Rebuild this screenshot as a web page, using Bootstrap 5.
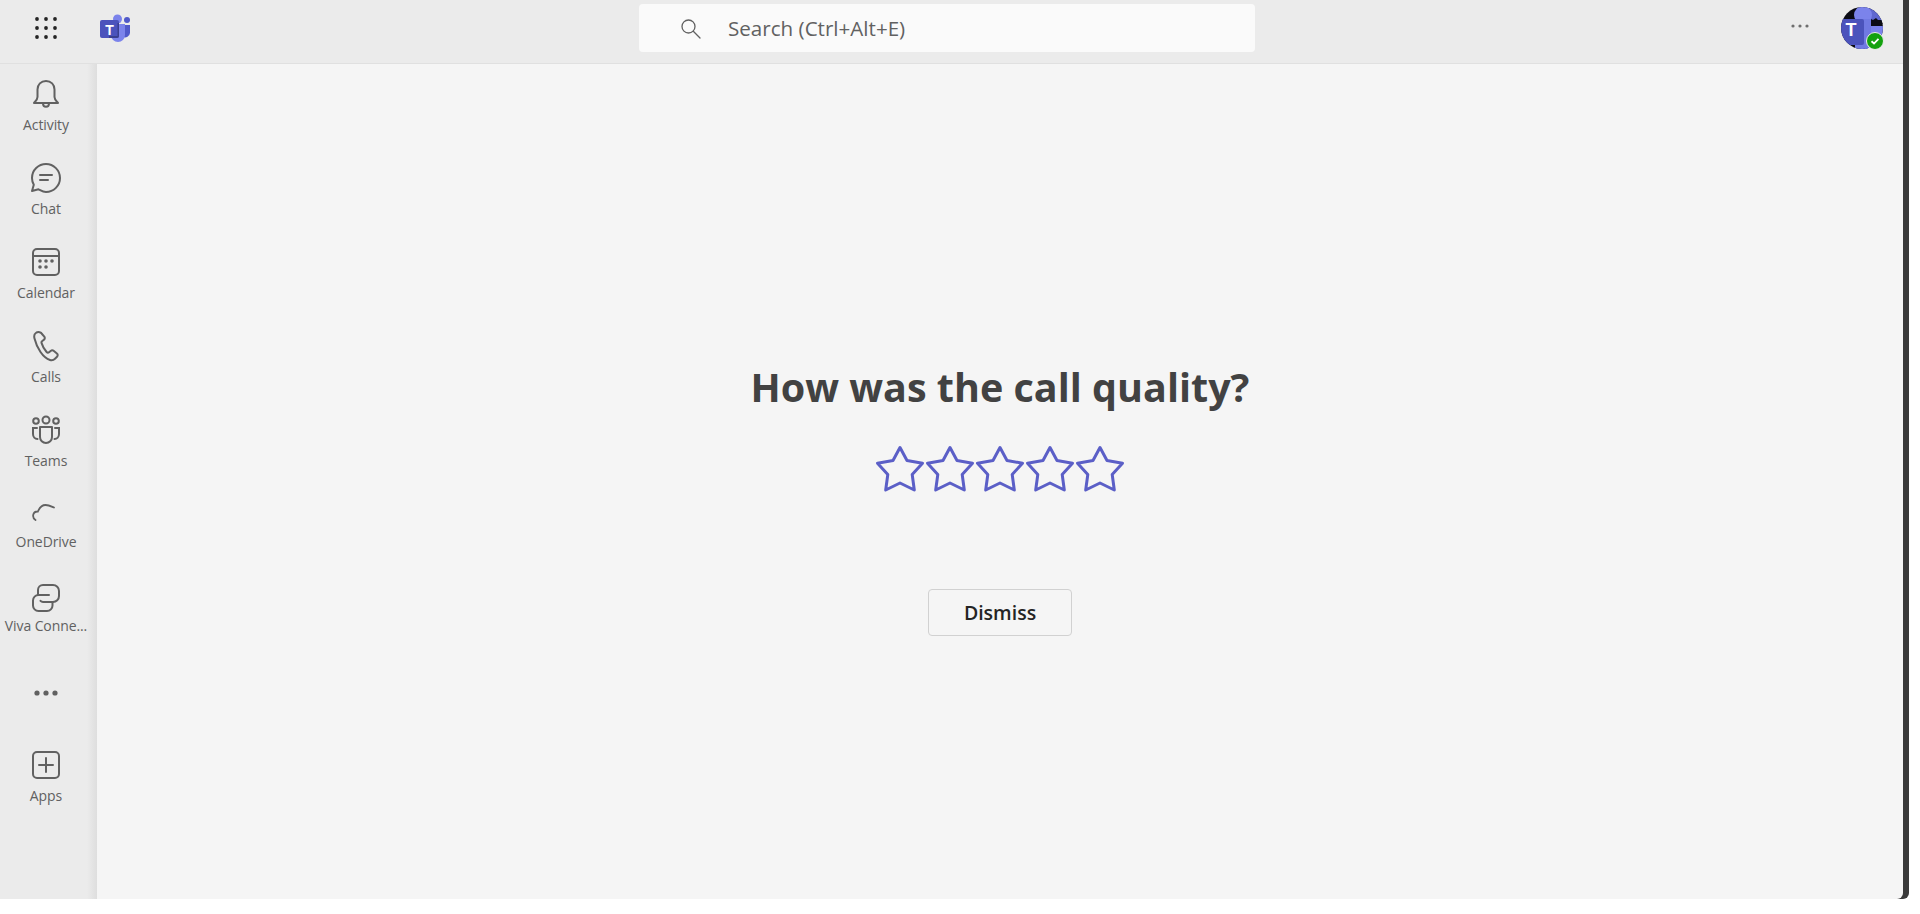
<!DOCTYPE html>
<html lang="en">
<head>
  <meta charset="UTF-8">
  <title>Microsoft Teams</title>
  <link href="https://cdn.jsdelivr.net/npm/bootstrap@5.3.0/dist/css/bootstrap.min.css" rel="stylesheet">
  <style>
    html, body { height: 100%; overflow: hidden; }
    body { background: #fff; font-family: "Open Sans", "Noto Sans", "Liberation Sans", sans-serif; }
    .window-back { width: 1909px; height: 899px; background: #3a3a3a; border-bottom-right-radius: 6px; }
    .app-frame { width: 1903px; height: 899px; background: #f5f5f5; border-bottom-right-radius: 6px; overflow: hidden; }
    .top-bar { height: 64px; padding-bottom: 7px; background: #ebebeb; border-bottom: 1px solid #e0e0e0; }
    .waffle-cell { width: 92px; }
    .logo-cell { width: 32px; margin-left: 8px; line-height: 0; }
    .search-box { width: 616px; height: 48px; margin-left: 507px; background: #fafafa; border-radius: 4px; color: #616161; font-size: 20.6px; padding-left: 41px; gap: 27px; }
    .more-top { margin-left: auto; width: 24px; margin-right: 29px; margin-bottom: 4px; }
    .me-pic { position: relative; width: 42px; height: 42px; margin-right: 20px; }
    .status-dot { position: absolute; right: -1px; bottom: -1px; width: 18px; height: 18px; border-radius: 50%; background: #13a10e; border: 1px solid #ebebeb; }
    .side-rail { width: 97px; padding: 5px 5px 0 0; background: linear-gradient(to right, #ebebeb 87px, #dedede 97px); }
    .rail-item { height: 84px; color: #616161; font-size: 14px; line-height: 18px; padding-top: 9px; }
    .rail-item svg { margin-bottom: 6px; }
    .rail-item span { letter-spacing: -.1px; white-space: nowrap; }
    .rail-onedrive { height: 82px; padding-top: 6px; }
    .rail-viva { height: 80px; padding-top: 11px; }
    .rail-viva svg { margin-bottom: 3px; }
    .rail-more { height: 84px; }
    .rail-apps { padding-top: 14px; }
    .rate-title { font-size: 39.5px; line-height: 54px; font-weight: 700; color: #424242; margin: 296px 0 0; }
    .star-row { margin-top: 31px; }
    .dismiss-btn { width: 144px; height: 47px; margin-top: 94px; background: #f5f5f5; border: 1px solid #d1d1d1; border-radius: 4px; font-size: 19.5px; font-weight: 600; color: #242424; padding: 0; }
    .dismiss-btn:hover { background: #f0f0f0; border-color: #c7c7c7; color: #242424; }
  </style>
</head>
<body>
  <div class="window-back">
  <div class="app-frame d-flex flex-column">

    <div class="top-bar d-flex align-items-center flex-shrink-0">
      <div class="waffle-cell d-flex justify-content-center">
        <svg width="24" height="24" viewBox="0 0 24 24" fill="#242424">
          <circle cx="3" cy="3" r="1.900"/><circle cx="12" cy="3" r="1.900"/><circle cx="21" cy="3" r="1.900"/>
          <circle cx="3" cy="12" r="1.900"/><circle cx="12" cy="12" r="1.900"/><circle cx="21" cy="12" r="1.900"/>
          <circle cx="3" cy="21" r="1.900"/><circle cx="12" cy="21" r="1.900"/><circle cx="21" cy="21" r="1.900"/>
        </svg>
      </div>
      <div class="logo-cell">
        <svg width="32" height="28" viewBox="0 0 32 28">
          <circle cx="27" cy="6" r="3" fill="#5059c9"/>
          <path d="M23 11h7v8a5 5 0 0 1-7 4z" fill="#5059c9"/>
          <circle cx="17.500" cy="5" r="4.500" fill="#7b83eb"/>
          <path d="M11 10h14v11a7 7 0 0 1-14 0z" fill="#7b83eb"/>
          <rect x="0" y="6" width="19" height="18" rx="2" fill="#4b53bc"/>
          <path d="M19 9h-1.500v13H9v2h8a2 2 0 0 0 2-2z" fill="#3a3f8f"/>
          <text x="9.500" y="20.500" text-anchor="middle" fill="#fff" font-family="Liberation Sans, sans-serif" font-size="14" font-weight="700">T</text>
        </svg>
      </div>
      <div class="search-box d-flex align-items-center">
        <svg width="21" height="21" viewBox="0 0 21 21" fill="none" stroke="#616161" stroke-width="1.300">
          <circle cx="8.500" cy="8.500" r="6.500"/><path d="M13.300 13.300 20 20" stroke-linecap="round"/>
        </svg>
        <span>Search (Ctrl+Alt+E)</span>
      </div>
      <div class="more-top d-flex justify-content-center">
        <svg width="18" height="4" viewBox="0 0 18 4" fill="#6e6e6e"><circle cx="2" cy="2" r="1.600"/><circle cx="9" cy="2" r="1.600"/><circle cx="16" cy="2" r="1.600"/></svg>
      </div>
      <div class="me-pic">
        <svg width="42" height="42" viewBox="0 0 42 42">
          <defs><clipPath id="picClip"><circle cx="21" cy="21" r="21"/></clipPath></defs>
          <g clip-path="url(#picClip)">
            <rect width="42" height="42" fill="#0b0b14"/>
            <rect x="24" y="0" width="18" height="14" fill="#5f67cf"/>
            <path d="M22 15l5-1 3-2 2 1 3-2 2 2 5 0v4H22z" fill="#0b0b14"/>
            <rect x="24" y="19" width="18" height="23" fill="#7b83eb"/>
            <circle cx="22" cy="8" r="9" fill="#7b83eb"/>
            <rect x="14" y="12" width="16" height="30" fill="#7079e2"/>
            <rect x="-2" y="12" width="25" height="26" rx="2" fill="#4b53bc"/>
            <text x="10" y="29" text-anchor="middle" fill="#fff" font-family="Liberation Sans, sans-serif" font-size="18" font-weight="700">T</text>
          </g>
        </svg>
        <div class="status-dot d-flex align-items-center justify-content-center">
          <svg width="10" height="10" viewBox="0 0 10 10" fill="none" stroke="#fff" stroke-width="1.800"><path d="M1.500 5.300 4 7.500 8.500 2.800"/></svg>
        </div>
      </div>
    </div>

    <div class="d-flex flex-grow-1">
      <nav class="side-rail d-flex flex-column flex-shrink-0">
        <div class="rail-item d-flex flex-column align-items-center">
          <svg width="32" height="32" viewBox="0 0 32 32" fill="none" stroke="#616161" stroke-width="2">
            <path d="M4 25h24c-1.700-2-3.500-3.500-3.500-6v-7.500C24.500 6.500 21 3 16 3s-8.500 3.500-8.500 8.500V19c0 2.500-1.800 4-3.500 6z" stroke-linejoin="round"/>
            <path d="M13 25.500c0 2 1.300 3.200 3 3.200s3-1.200 3-3.200"/>
          </svg>
          <span>Activity</span>
        </div>
        <div class="rail-item d-flex flex-column align-items-center">
          <svg width="32" height="32" viewBox="0 0 32 32" fill="none" stroke="#616161" stroke-width="2">
            <path d="M16 2C8.500 2 2 8 2 16c0 2.500.7 4.800 1.800 6.800L2 29l6.500-1.700C10.700 28.400 13.200 30 16 30c7.700 0 14-6.300 14-14S23.700 2 16 2z" stroke-linejoin="round"/>
            <path d="M10 13h12M10 18h8" stroke-linecap="round"/>
          </svg>
          <span>Chat</span>
        </div>
        <div class="rail-item d-flex flex-column align-items-center">
          <svg width="32" height="32" viewBox="0 0 32 32" fill="none" stroke="#616161" stroke-width="2">
            <rect x="3" y="3" width="26" height="26" rx="4"/>
            <path d="M3 10h26"/>
            <g fill="#616161" stroke="none"><circle cx="10" cy="15" r="1.800"/><circle cx="16" cy="15" r="1.800"/><circle cx="22" cy="15" r="1.800"/><circle cx="10" cy="21" r="1.800"/><circle cx="16" cy="21" r="1.800"/></g>
          </svg>
          <span>Calendar</span>
        </div>
        <div class="rail-item d-flex flex-column align-items-center">
          <svg width="32" height="32" viewBox="0 0 32 32" fill="none" stroke="#616161" stroke-width="2">
            <path d="M6.500 2.500 5.800 3C4 4.200 4 6.500 4.500 8.500c1.200 5 3.300 9.500 6 13.500 2.600 3.800 5.500 6.700 9.500 8 1.800.6 3.600.2 5-1.200l2-2c1-1 1-2.500-.1-3.400l-3-2.400c-1-.8-2.300-.8-3.300 0l-1.500 1.200c-.8.600-1.800.5-2.500-.2-2.400-2.700-4-5.500-5-8.900-.3-.9 0-1.800.9-2.300l1-.7c1.100-.7 1.500-2 1-3.200L12 4c-.8-1.600-3.700-2.400-5.500-1.500z" stroke-linejoin="round"/>
          </svg>
          <span>Calls</span>
        </div>
        <div class="rail-item d-flex flex-column align-items-center">
          <svg width="32" height="32" viewBox="0 0 32 32" fill="none" stroke="#616161" stroke-width="2">
            <circle cx="16" cy="6" r="3.500"/><circle cx="6" cy="7" r="2.800"/><circle cx="26" cy="7" r="2.800"/>
            <path d="M10 13h12v10c0 3.500-2.700 6-6 6s-6-2.500-6-6z" stroke-linejoin="round"/>
            <path d="M7 14H3v6c0 3 2 5 4.500 5M25 14h4v6c0 3-2 5-4.500 5" stroke-linecap="round"/>
          </svg>
          <span>Teams</span>
        </div>
        <div class="rail-item rail-onedrive d-flex flex-column align-items-center">
          <svg width="32" height="32" viewBox="0 0 32 32" fill="none" stroke="#616161" stroke-width="1.800">
            <path d="M5.500 25c-1.800-1-2.700-2.500-2.300-5 .4-2.300 2.300-3.600 4.700-3.500C9.200 13.500 12 10 15.500 10c3 0 5 1 8.500 2.500" stroke-linecap="round"/>
          </svg>
          <span>OneDrive</span>
        </div>
        <div class="rail-item rail-viva d-flex flex-column align-items-center">
          <svg width="32" height="32" viewBox="0 0 32 32" fill="none" stroke="#616161" stroke-width="2">
            <path d="M8 13V8a5 5 0 0 1 5-5h10a6 6 0 0 1 6 6v5a6 6 0 0 1-6 6H13a3.500 3.500 0 0 1-2.500-1.200" stroke-linecap="round"/>
            <path d="M19 13H8.500A5.500 5.500 0 0 0 3 18.500v5A5.500 5.500 0 0 0 8.500 29H17a5.500 5.500 0 0 0 5.500-5.500V20" stroke-linecap="round"/>
          </svg>
          <span>Viva Conne...</span>
        </div>
        <div class="rail-more d-flex align-items-center justify-content-center">
          <svg width="24" height="6" viewBox="0 0 24 6" fill="#616161"><circle cx="3" cy="3" r="2.600"/><circle cx="12" cy="3" r="2.600"/><circle cx="21" cy="3" r="2.600"/></svg>
        </div>
        <div class="rail-item rail-apps d-flex flex-column align-items-center">
          <svg width="32" height="32" viewBox="0 0 32 32" fill="none" stroke="#616161" stroke-width="2">
            <rect x="3" y="3" width="26" height="26" rx="4"/>
            <path d="M16 9v14M9 16h14" stroke-linecap="round"/>
          </svg>
          <span>Apps</span>
        </div>
      </nav>

      <main class="flex-grow-1 d-flex flex-column align-items-center">
        <h1 class="rate-title">How was the call quality?</h1>
        <div class="star-row d-flex">
          <svg width="0" height="0" class="position-absolute">
            <symbol id="starOutline" viewBox="0 0 50 50">
              <path d="M25 2.500 32 15.500l15.500 2.700L37.200 29.500l2.100 15.500L25 38l-14.300 7 2.100-15.500L2.500 18.200 18 15.500z" fill="none" stroke="#5b5fc7" stroke-width="3" stroke-linejoin="round"/>
            </symbol>
          </svg>
          <svg width="50" height="50"><use href="#starOutline"/></svg>
          <svg width="50" height="50"><use href="#starOutline"/></svg>
          <svg width="50" height="50"><use href="#starOutline"/></svg>
          <svg width="50" height="50"><use href="#starOutline"/></svg>
          <svg width="50" height="50"><use href="#starOutline"/></svg>
        </div>
        <button type="button" class="btn dismiss-btn">Dismiss</button>
      </main>
    </div>
  </div>
  </div>

  <script src="https://cdn.jsdelivr.net/npm/bootstrap@5.3.0/dist/js/bootstrap.bundle.min.js"></script>
</body>
</html>
